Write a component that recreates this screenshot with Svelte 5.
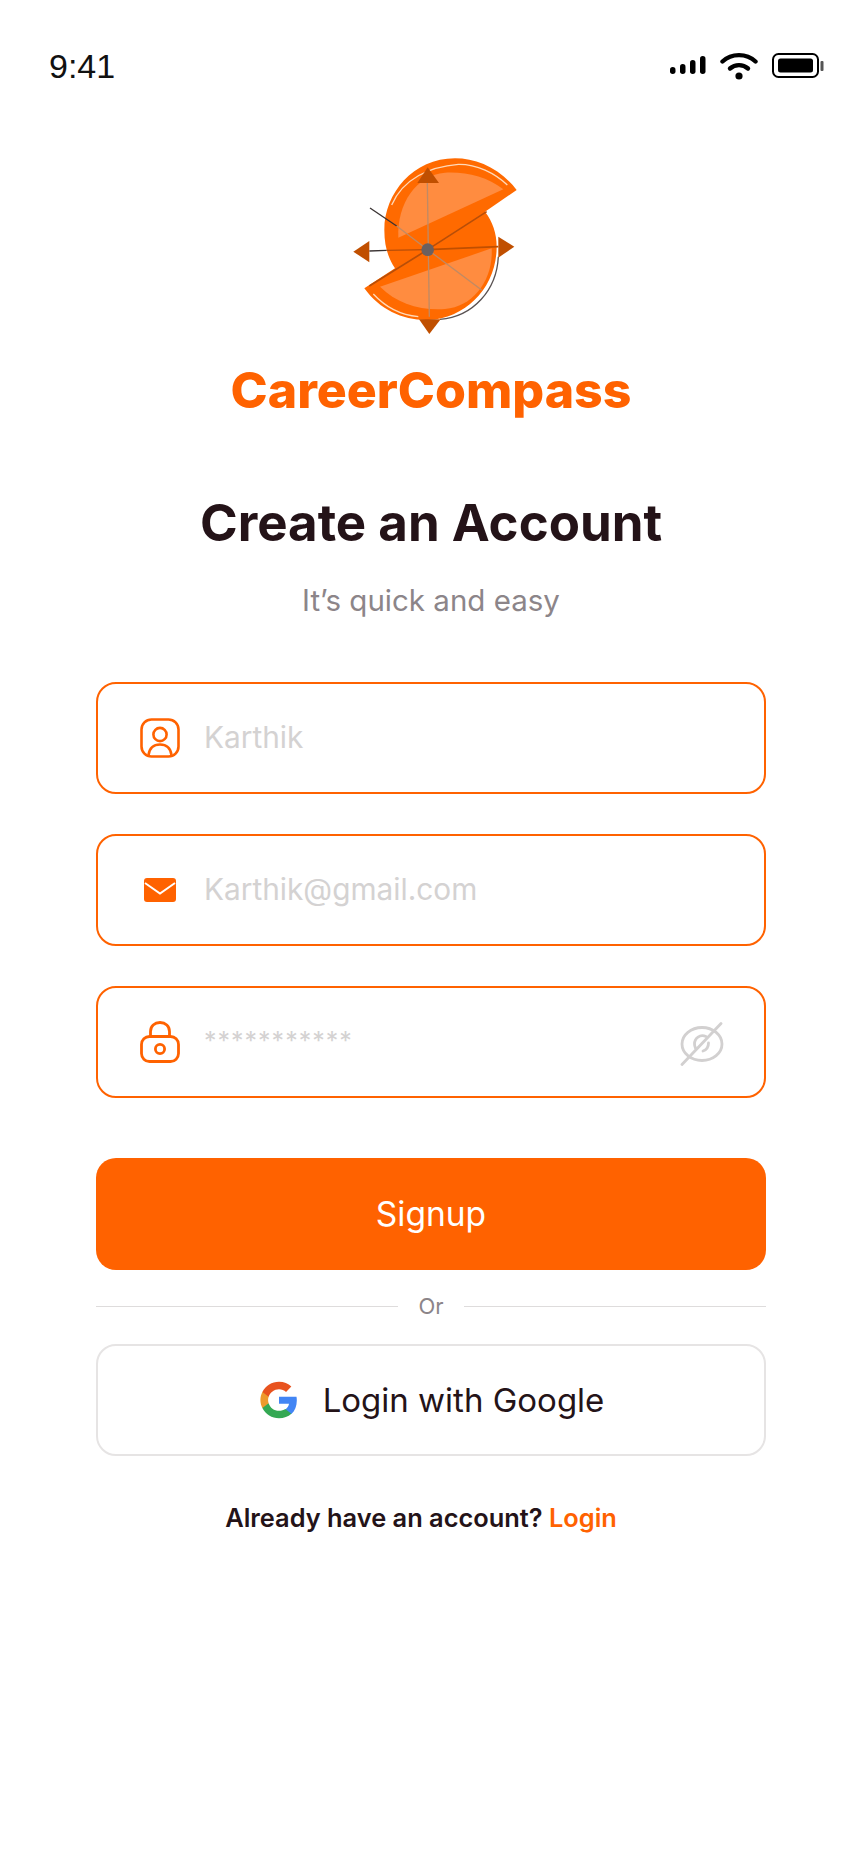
<script>
  const fields = [
    { icon: 'user', text: 'Karthik' },
    { icon: 'mail', text: 'Karthik@gmail.com' },
    { icon: 'lock', text: '***********', secret: true }
  ];
</script>

<div class="page">
  <header class="status">
    <span class="time">9:41</span>
    <div class="status-icons">
      <svg width="36" height="20" viewBox="0 0 36 20" fill="#000">
        <rect x="0" y="11" width="5.5" height="7" rx="2.7" />
        <rect x="10" y="8" width="5.5" height="10" rx="2.7" />
        <rect x="20" y="4" width="5.5" height="14" rx="2.7" />
        <rect x="30" y="0" width="5.5" height="18" rx="2.7" />
      </svg>
      <svg width="38" height="28" viewBox="0 0 38 28" fill="none" stroke="#000" stroke-width="4.4" stroke-linecap="round">
        <path d="M2.5 9.5C11.5 1 26.5 1 35.5 9.5" />
        <path d="M10 16.5C15 12 23 12 28 16.5" />
        <circle cx="19" cy="24" r="3.6" fill="#000" stroke="none" />
      </svg>
      <svg width="52" height="26" viewBox="0 0 52 26">
        <rect x="1" y="1" width="45" height="23" rx="5.5" fill="#fff" stroke="#000" stroke-width="2" />
        <rect x="6" y="5.5" width="35" height="14" rx="2.5" fill="#000" />
        <rect x="48.5" y="8" width="3" height="10" rx="1" fill="#555" />
      </svg>
    </div>
  </header>

  <main class="content">
    <svg class="mark" width="210" height="210" viewBox="0 0 630 630">
      <path d="M505 350C500 450 430 530 330 538" fill="none" stroke="#5a5252" stroke-width="4" />
      <path fill="#ff6a00" d="M560 150C510 85 440 55 375 55C250 55 163 160 163 270C163 320 175 355 195 385L103 445C150 510 220 542 295 540C410 535 500 440 500 320C500 280 488 245 465 215Z" />
      <path fill="#ff8c40" d="M520 148C470 110 410 95 345 98C260 105 200 190 205 293Z" />
      <path fill="#ff8c40" d="M150 440L485 325C490 420 430 500 345 507C270 512 200 490 150 440Z" />
      <path fill="none" stroke="#ffd9b8" stroke-width="4" d="M185 195C220 115 300 80 385 73C440 72 495 100 532 135" />
      <path fill="none" stroke="#ffd9b8" stroke-width="4" d="M130 462C165 500 210 525 265 530" />
      <g fill="none" stroke-width="4">
        <path stroke="#c08a64" d="M292 128L298 530" />
        <path stroke="#c08a64" d="M293 329L455 450" />
        <path stroke="#c04f00" stroke-width="5" d="M293 329L505 320" />
        <path stroke="#b84e08" stroke-width="5" d="M293 329L470 215" />
        <path stroke="#b84e08" stroke-width="5" d="M293 329L118 438" />
        <path stroke="#3a3333" d="M120 204L200 258" />
        <path stroke="#c08a64" d="M200 258L293 329" />
        <path stroke="#3a3333" d="M118 333L170 331" />
        <path stroke="#b84e08" d="M170 331L293 329" />
      </g>
      <circle cx="293" cy="329" r="19" fill="#6b6060" />
      <g fill="#c04f00">
        <path d="M293 82L262 129H327Z" />
        <path d="M70 335L118 303V367Z" />
        <path d="M553 320L505 290V353Z" />
        <path d="M298 582L267 538H332Z" />
      </g>
    </svg>
    <div class="brand">CareerCompass</div>

    <h1>Create an Account</h1>
    <p class="sub">It’s quick and easy</p>

    <form class="fields" onsubmit={(e) => e.preventDefault()}>
      {#each fields as f}
        <div class="field">
          <span class="icon">
            {#if f.icon === 'user'}
              <svg width="40" height="40" viewBox="0 0 40 40" fill="none" stroke="#ff6200" stroke-width="2.6">
                <rect x="1.5" y="1.5" width="37" height="37" rx="10" />
                <circle cx="20" cy="16.5" r="6.6" />
                <path d="M8.5 37C9.5 30 14 26.5 20 26.5C26 26.5 30.5 30 31.5 37" />
              </svg>
            {:else if f.icon === 'mail'}
              <svg width="32" height="24" viewBox="0 0 32 24">
                <rect width="32" height="24" rx="3" fill="#ff6200" />
                <path d="M1 5L16 15.500L31 5" fill="none" stroke="#fff" stroke-width="2" />
              </svg>
            {:else}
              <svg width="40" height="42" viewBox="0 0 40 42" fill="none" stroke="#ff6200" stroke-width="2.8">
                <rect x="1.500" y="15.500" width="37" height="25" rx="8" />
                <path d="M10.500 15.500V10.500C10.500 5 14.500 1.500 20 1.500C25.500 1.500 29.500 5 29.500 10.500V15.500" />
                <circle cx="20" cy="28" r="4.600" />
              </svg>
            {/if}
          </span>
          <span class="value" class:secret={f.secret}>{f.text}</span>
          {#if f.secret}
            <svg class="eye" width="44" height="44" viewBox="0 0 44 44" fill="none" stroke="#d2d0d0" stroke-width="2.800" stroke-linecap="round">
              <ellipse cx="22" cy="22" rx="20" ry="16.500" />
              <path d="M26 14.500C20 12 14.500 16 14.500 22C14.500 24 15 25 15.500 26" />
              <path d="M28.500 21C28.500 25 26 28 23 29" />
              <path d="M41 1.500L2 42.500" />
            </svg>
          {/if}
        </div>
      {/each}

      <button type="submit" class="signup">Signup</button>

      <div class="or"><span>Or</span></div>

      <button type="button" class="google">
        <svg width="38" height="38" viewBox="0 0 48 48">
          <path fill="#4285f4" d="M46.500 24.500c0-1.600-.1-3.200-.4-4.700H24v9h12.700c-.6 2.900-2.200 5.400-4.700 7.100v5.900h7.600c4.400-4.100 6.900-10.100 6.900-17.300z" />
          <path fill="#34a853" d="M24 47c6.300 0 11.600-2.100 15.600-5.700L32 35.400c-2.100 1.400-4.800 2.300-8 2.300-6.100 0-11.300-4.100-13.100-9.700H3v6.100C7 42 15 47 24 47z" />
          <path fill="#ed9a2d" d="M10.900 28c-.5-1.300-.7-2.700-.7-4s.3-2.700.7-4v-6.100H3C1.400 17 .5 20.400.5 24s.9 7 2.500 10.100l7.900-6.100z" />
          <path fill="#e8531f" d="M24 10.300c3.400 0 6.500 1.200 8.900 3.500l6.700-6.700C35.600 3.300 30.300 1 24 1 15 1 7 6 3 13.900l7.900 6.100c1.800-5.600 7-9.700 13.100-9.700z" />
        </svg>
        <span>Login with Google</span>
      </button>
    </form>

    <p class="login">Already have an account? <a href="#login">Login</a></p>
  </main>
</div>

<style>
  :global(body) { margin: 0; background: #fff; }
  .page { width: 860px; height: 1864px; font-family: Inter, "Noto Sans", sans-serif; color: #241318; overflow: hidden; }

  .status { display: flex; justify-content: space-between; align-items: center; height: 40px; padding: 46px 36px 0 49px; }
  .time { font: 34px/40px "Liberation Sans", sans-serif; color: #111; }
  .status-icons { display: flex; align-items: center; gap: 14px; }

  .content { display: flex; flex-direction: column; align-items: center; width: 670px; margin-left: 96px; }
  .mark { display: block; margin-top: 54px; margin-left: 8px; }
  .brand { margin-top: 12px; font-size: 50px; line-height: 56px; font-weight: 800; color: #ff6200; }

  h1 { margin: 75px 0 0; font-size: 51px; line-height: 60px; font-weight: 700; color: #241318; }
  .sub { margin: 29px 0 0; font-size: 29.500px; line-height: 36px; font-weight: 400; color: #8c8589; }

  .fields { width: 100%; display: flex; flex-direction: column; margin-top: 64px; }
  .field { display: flex; align-items: center; box-sizing: border-box; height: 112px; margin-bottom: 40px; padding: 0 40px 0 42px; border: 2px solid #ff6200; border-radius: 20px; background: #fff; }
  .icon { display: flex; justify-content: center; width: 40px; flex: none; margin-right: 24px; }
  .value { font-size: 29.800px; color: #d4d2d2; position: relative; top: -1px; }
  .value.secret { font-size: 25px; letter-spacing: 1px; top: -1px; }
  .eye { margin-left: auto; position: relative; top: 2px; }

  button { font-family: inherit; cursor: pointer; }
  .signup { height: 112px; margin-top: 20px; border: 0; border-radius: 20px; background: #ff6200; color: #fff; font-size: 33.500px; }

  .or { display: flex; align-items: center; gap: 20px; height: 28px; margin: 22px 0 24px; color: #8c8589; font-size: 22px; }
  .or::before, .or::after { content: ""; flex: 1; height: 1px; background: #dedcdc; }

  .google { display: flex; align-items: center; justify-content: center; gap: 25px; height: 112px; padding-left: 8px; border: 2px solid #e6e4e4; border-radius: 20px; background: #fff; color: #241318; font-size: 33px; }

  .login { margin: 46px 20px 0 0; font-size: 25.400px; line-height: 32px; font-weight: 600; color: #241318; }
  .login a { color: #ff6200; text-decoration: none; }
</style>
